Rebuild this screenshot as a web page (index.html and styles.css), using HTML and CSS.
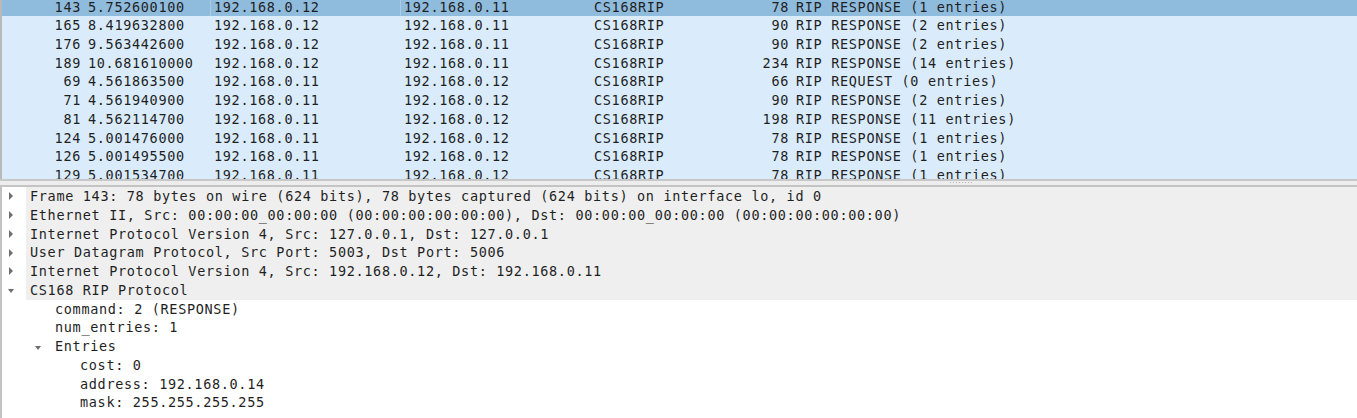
FILE: index.html
```html
<!DOCTYPE html>
<html>
<head>
<meta charset="utf-8">
<link rel="stylesheet" href="styles.css">
</head>
<body>
<div class="packet-list">
  <div class="row selected"><span class="c no">143</span><span class="c time">5.752600100</span><span class="c src">192.168.0.12</span><span class="c dst">192.168.0.11</span><span class="c proto">CS168RIP</span><span class="c len">78</span><span class="c info">RIP RESPONSE (1 entries)</span></div>
  <div class="row"><span class="c no">165</span><span class="c time">8.419632800</span><span class="c src">192.168.0.12</span><span class="c dst">192.168.0.11</span><span class="c proto">CS168RIP</span><span class="c len">90</span><span class="c info">RIP RESPONSE (2 entries)</span></div>
  <div class="row"><span class="c no">176</span><span class="c time">9.563442600</span><span class="c src">192.168.0.12</span><span class="c dst">192.168.0.11</span><span class="c proto">CS168RIP</span><span class="c len">90</span><span class="c info">RIP RESPONSE (2 entries)</span></div>
  <div class="row"><span class="c no">189</span><span class="c time">10.681610000</span><span class="c src">192.168.0.12</span><span class="c dst">192.168.0.11</span><span class="c proto">CS168RIP</span><span class="c len">234</span><span class="c info">RIP RESPONSE (14 entries)</span></div>
  <div class="row"><span class="c no">69</span><span class="c time">4.561863500</span><span class="c src">192.168.0.11</span><span class="c dst">192.168.0.12</span><span class="c proto">CS168RIP</span><span class="c len">66</span><span class="c info">RIP REQUEST (0 entries)</span></div>
  <div class="row"><span class="c no">71</span><span class="c time">4.561940900</span><span class="c src">192.168.0.11</span><span class="c dst">192.168.0.12</span><span class="c proto">CS168RIP</span><span class="c len">90</span><span class="c info">RIP RESPONSE (2 entries)</span></div>
  <div class="row"><span class="c no">81</span><span class="c time">4.562114700</span><span class="c src">192.168.0.11</span><span class="c dst">192.168.0.12</span><span class="c proto">CS168RIP</span><span class="c len">198</span><span class="c info">RIP RESPONSE (11 entries)</span></div>
  <div class="row"><span class="c no">124</span><span class="c time">5.001476000</span><span class="c src">192.168.0.11</span><span class="c dst">192.168.0.12</span><span class="c proto">CS168RIP</span><span class="c len">78</span><span class="c info">RIP RESPONSE (1 entries)</span></div>
  <div class="row"><span class="c no">126</span><span class="c time">5.001495500</span><span class="c src">192.168.0.11</span><span class="c dst">192.168.0.12</span><span class="c proto">CS168RIP</span><span class="c len">78</span><span class="c info">RIP RESPONSE (1 entries)</span></div>
  <div class="row"><span class="c no">129</span><span class="c time">5.001534700</span><span class="c src">192.168.0.11</span><span class="c dst">192.168.0.12</span><span class="c proto">CS168RIP</span><span class="c len">78</span><span class="c info">RIP RESPONSE (1 entries)</span></div>
</div>
<div class="splitter"><span class="grip"></span></div>
<div class="details">
  <div class="node top"><span class="exp"><span class="tri-r"></span></span><span class="label">Frame 143: 78 bytes on wire (624 bits), 78 bytes captured (624 bits) on interface lo, id 0</span></div>
  <div class="node top"><span class="exp"><span class="tri-r"></span></span><span class="label">Ethernet II, Src: 00:00:00_00:00:00 (00:00:00:00:00:00), Dst: 00:00:00_00:00:00 (00:00:00:00:00:00)</span></div>
  <div class="node top"><span class="exp"><span class="tri-r"></span></span><span class="label">Internet Protocol Version 4, Src: 127.0.0.1, Dst: 127.0.0.1</span></div>
  <div class="node top"><span class="exp"><span class="tri-r"></span></span><span class="label">User Datagram Protocol, Src Port: 5003, Dst Port: 5006</span></div>
  <div class="node top"><span class="exp"><span class="tri-r"></span></span><span class="label">Internet Protocol Version 4, Src: 192.168.0.12, Dst: 192.168.0.11</span></div>
  <div class="node top"><span class="exp"><span class="tri-d"></span></span><span class="label">CS168 RIP Protocol</span></div>
  <div class="node l1"><span class="exp"></span><span class="label">command: 2 (RESPONSE)</span></div>
  <div class="node l1"><span class="exp"></span><span class="label">num_entries: 1</span></div>
  <div class="node l1"><span class="exp"><span class="tri-d"></span></span><span class="label">Entries</span></div>
  <div class="node l2"><span class="exp"></span><span class="label">cost: 0</span></div>
  <div class="node l2"><span class="exp"></span><span class="label">address: 192.168.0.14</span></div>
  <div class="node l2"><span class="exp"></span><span class="label">mask: 255.255.255.255</span></div>
</div>
</body>
</html>
```
FILE: styles.css
```css
html, body {
  margin: 0;
  padding: 0;
  background: #ffffff;
}
body {
  width: 1357px;
  height: 418px;
  overflow: hidden;
  font-family: "DejaVu Sans Mono", monospace;
  font-size: 13.5px;
  letter-spacing: 0.67px;
  color: #1f1f1f;
}
.packet-list {
  height: 179px;
  overflow: hidden;
  background: #daecfc;
  border-left: 2px solid #b9b9b9;
  box-sizing: border-box;
}
.row {
  display: flex;
  height: 18.78px;
  line-height: 18.78px;
  white-space: nowrap;
  background: #daecfc;
  margin-left: -2px;
}
.row.selected {
  background: #8fbbdd;
  height: 16.08px;
  line-height: 14px;
}
.c {
  box-sizing: border-box;
  padding: 0 4px;
  overflow: hidden;
}
.row.selected .src,
.row.selected .dst {
  box-shadow: inset 1px 0 0 rgba(255, 255, 255, 0.25);
}
.no { width: 84px; text-align: right; padding-right: 3px; }
.time { width: 126px; }
.src { width: 190px; }
.dst { width: 190px; }
.proto { width: 100px; }
.len { width: 102px; text-align: right; padding-right: 3px; }
.info { flex: 1; }

.splitter {
  height: 8px;
  box-sizing: border-box;
  border-top: 2px solid #c8c8c8;
  border-bottom: 2px solid #c4c4c4;
  background: #ededed;
  position: relative;
}
.grip {
  position: absolute;
  left: 950px;
  top: 1px;
  width: 22px;
  height: 1px;
  background: repeating-linear-gradient(90deg, #b8b8b8 0 1px, transparent 1px 3px);
}

.details {
  height: 231px;
  background: #ffffff;
  border-left: 2px solid #c2c2c2;
  box-sizing: border-box;
  overflow: hidden;
}
.node {
  display: flex;
  height: 18.78px;
  line-height: 18.78px;
  white-space: nowrap;
  margin-left: -2px;
}
.exp {
  width: 26px;
  flex: none;
  display: flex;
  align-items: center;
  padding-left: 8px;
  box-sizing: border-box;
}
.l1 { padding-left: 25px; }
.l2 { padding-left: 50px; }
.l1 .exp { padding-left: 10px; }
.label {
  padding-left: 4px;
  flex: 1;
}
.top .label {
  background: #efefef;
}
.tri-r {
  width: 0;
  height: 0;
  margin-left: 1px;
  border-top: 4px solid transparent;
  border-bottom: 4px solid transparent;
  border-left: 4px solid #6e6e6e;
}
.tri-d {
  width: 0;
  height: 0;
  margin-top: 2px;
  border-left: 3.5px solid transparent;
  border-right: 3.5px solid transparent;
  border-top: 4px solid #6e6e6e;
}
```
